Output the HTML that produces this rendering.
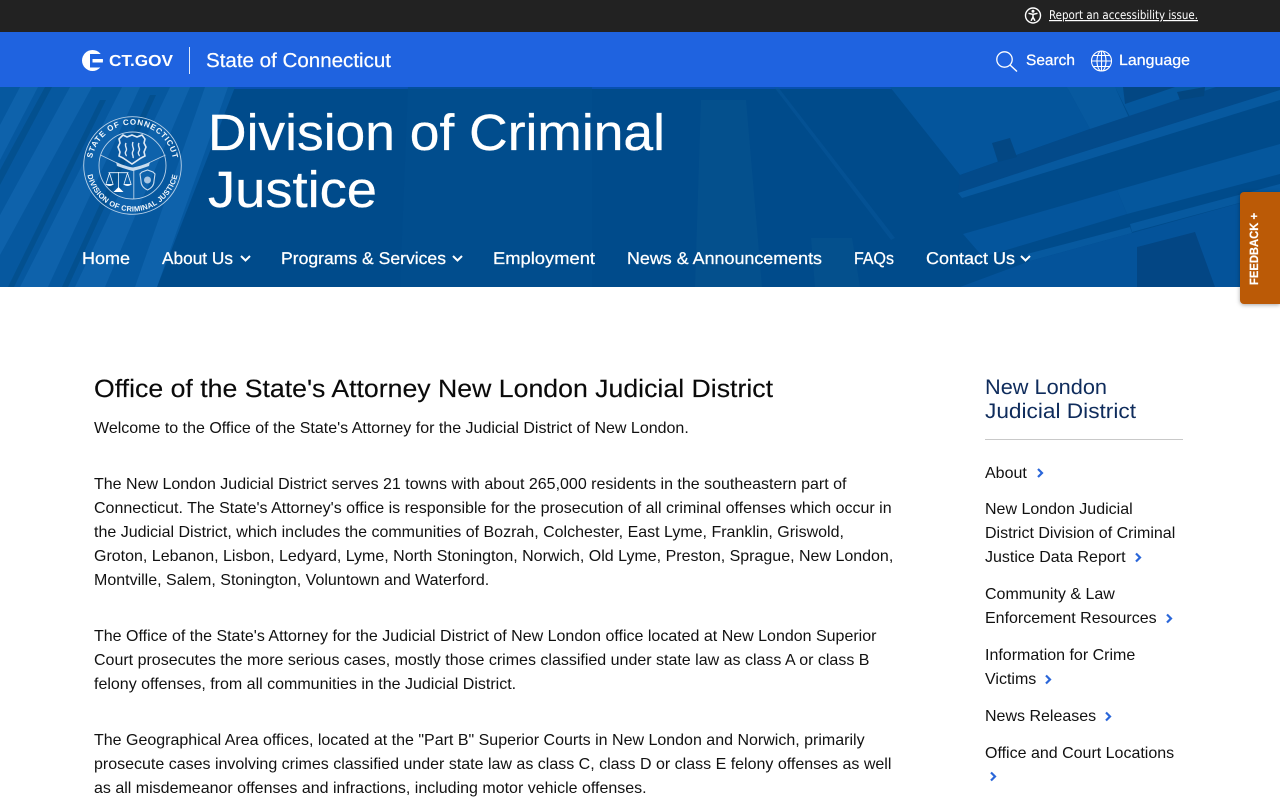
<!DOCTYPE html>
<html lang="en"><head><meta charset="utf-8"><title>Division of Criminal Justice</title>
<style>
html,body{margin:0;padding:0;background:#fff;width:1280px;height:800px;overflow:hidden}
body{position:relative;font-family:"Liberation Sans",Arial,sans-serif;color:#111}
svg{position:absolute;left:0;top:0;display:block;text-rendering:geometricPrecision}
.l{position:absolute;white-space:nowrap;font-size:16px;line-height:24px;color:#111}
.fb{position:absolute;left:1240px;top:192px;width:40px;height:112px;background:#bb5a06;border-radius:4px 0 0 4px;box-shadow:0 1px 4px rgba(0,0,0,.35)}
</style></head><body>
<svg width="1280" height="800" viewBox="0 0 1280 800" font-family="'Liberation Sans',sans-serif">
<defs>
<clipPath id="hero"><rect x="0" y="87" width="1280" height="200"/></clipPath>
<path id="top" d="M92 172a41 41 0 1 1 81 0" fill="none"/>
<path id="bot" d="M87.200 157.500a46 46 0 1 0 90.600 0" fill="none"/>
</defs>
<rect width="1280" height="32" fill="#222"/>
<rect y="32" width="1280" height="55" fill="#1f63e0"/>
<rect y="87" width="1280" height="200" fill="#004b8b"/>
<g clip-path="url(#hero)">
<rect y="87" width="1280" height="2" fill="#0750b0"/>
<polygon points="0,87 235,87 157,287 0,287" fill="#06589f"/>
<g fill="#0e62ab">
<polygon points="0,125 20,87 38,87 0,160"/><polygon points="0,215 70,87 92,87 0,255"/>
<polygon points="20,287 122,87 140,87 48,287"/><polygon points="75,287 170,87 190,87 105,287"/>
<polygon points="135,287 205,87 228,87 157,287"/>
</g>
<g fill="#03508f"><polygon points="0,170 45,87 52,87 0,185"/><polygon points="8,287 100,100 106,100 14,287"/><polygon points="62,287 150,95 156,95 68,287"/></g>
<polygon points="408,87 592,87 592,287 400,287" fill="#024e8f" opacity=".6"/>
<polygon points="701,100 746,100 762,287 695,287" fill="#07538f" opacity=".6"/>
<polygon points="811,238 852,238 860,287 815,287" fill="#07538f" opacity=".6"/>
<polygon points="774,87 778,87 895,238 891,240" fill="#07589c" opacity=".5"/>
<!-- architecture, right side -->
<polygon points="890,87 1067,87 1090,129 960,175" fill="#04559c"/>
<polygon points="1067,87 1115,87 1130,120 1090,129" fill="#07599f"/>
<polygon points="1115,87 1216,87 1130,117" fill="#05579d"/>
<polygon points="960,175 1090,129 1216,87 1280,87 1280,90 1067,157 958,193" fill="#034a8a"/>
<polygon points="958,193 1067,157 1280,90 1280,100 1070,165 962,198" fill="#07599f"/>
<polygon points="963,234 1117,190 1127,214 983,257" fill="#04559c"/>
<polygon points="1117,190 1280,144 1280,174 1127,214" fill="#05579d"/>
<polygon points="1130,224 1280,184 1280,192 1132,232" fill="#07599f"/>
<polygon points="1027,254 1130,227 1132,233 1030,261" fill="#07599f"/>
<polygon points="1030,261 1132,233 1280,192 1280,287 960,287" fill="#04539a"/>
<polygon points="1137,247 1195,232 1215,287 1137,287" fill="#034684"/>
<polygon points="992,143 1010,138 1017,157 998,162" fill="#034783"/>
<polygon points="1123,87 1175,87 1125,104" fill="#034783"/>
<polygon points="1177,92 1205,87 1204,96 1180,100" fill="#034680"/>
</g>
<!-- top bar -->
<circle cx="1033" cy="15.500" r="7.500" fill="none" stroke="#fff" stroke-width="1.400"/>
<circle cx="1033" cy="11.300" r="1.500" fill="#fff"/>
<path d="M1028.500 13.300l4.500 1 4.500-1M1033 14.300v3l-2 3.500M1033 17.300l2 3.500" fill="none" stroke="#fff" stroke-width="1.500"/>
<text x="1049" y="19" font-family="'DejaVu Sans',sans-serif" font-size="12" fill="#fff" text-decoration="underline" textLength="149" lengthAdjust="spacingAndGlyphs">Report an accessibility issue.</text>
<!-- CT.GOV -->
<circle cx="92.500" cy="60.500" r="10.500" fill="#fff"/>
<rect x="90" y="54" width="14" height="5" fill="#1f63e0"/><rect x="90" y="62.500" width="14" height="5" fill="#1f63e0"/><rect x="90" y="54" width="2.500" height="13.500" fill="#1f63e0"/>
<text x="109" y="66" font-size="16" font-weight="700" fill="#fff" textLength="64" lengthAdjust="spacingAndGlyphs">CT.GOV</text>
<rect x="189" y="47" width="1" height="27" fill="#dfe9fb"/>
<text x="206" y="67" font-size="20" fill="#fff" stroke="#fff" stroke-width=".2" textLength="185" lengthAdjust="spacingAndGlyphs">State of Connecticut</text>
<circle cx="1004.500" cy="59.500" r="7.700" fill="none" stroke="#fff" stroke-width="1.300"/>
<path d="M1010 65l7 6.500" stroke="#fff" stroke-width="1.400"/>
<text x="1026" y="65" font-size="15" fill="#fff" stroke="#fff" stroke-width=".25" textLength="49" lengthAdjust="spacingAndGlyphs">Search</text>
<g fill="none" stroke="#fff" stroke-width="1.100"><circle cx="1101.500" cy="61" r="10"/><ellipse cx="1101.500" cy="61" rx="4.500" ry="10"/><path d="M1101.500 51v20M1091.500 61h20M1093 55.500h17M1093 66.500h17"/></g>
<text x="1119" y="65" font-size="15" fill="#fff" stroke="#fff" stroke-width=".25" textLength="71" lengthAdjust="spacingAndGlyphs">Language</text>
<!-- seal -->
<g fill="none" stroke="#b9d1e8">
<circle cx="132.500" cy="165.500" r="48.800" stroke-width=".9"/>
<circle cx="132.500" cy="165.500" r="33.500" stroke-width=".9"/>
<path d="M100.500 155l16.500 8M165.500 155l-17 8M133.800 169v30" stroke-width=".9"/>
</g>
<text font-size="8" font-weight="700" fill="#f4f8fc"><textPath href="#top" startOffset="50%" text-anchor="middle" textLength="114" lengthAdjust="spacing">STATE OF CONNECTICUT</textPath></text>
<text font-size="7.500" font-weight="700" fill="#f4f8fc" letter-spacing=".25"><textPath href="#bot" startOffset="50%" text-anchor="middle">DIVISION OF CRIMINAL JUSTICE</textPath></text>
<!-- crest -->
<path d="M119 139l4-4 4 2 5-2 5 2 5-2 3 4-1 4 2 4-2 5 1 4-4 2-9 6-9-6-4-2 1-4-2-5 2-4z" fill="#0b5aa3" stroke="#dfeaf5" stroke-width="1.600"/>
<path d="M126 143c-2 4 2 5 0 8s1 4 0 5M133 142c-2 5 2 6 0 9s1 5 0 7M139 143c-2 4 2 5 0 8s1 4 0 5" fill="none" stroke="#dfeaf5" stroke-width="1.400"/>
<path d="M116 162q8 4 17 5.500 8-1.500 17-5.500l-1 4q-8 3-16 5-8-2-16-5z" fill="#c9dcee"/>
<!-- scales -->
<path d="M108.500 172.700h20M118.500 172v19M109.500 173l-3.500 11M109.500 173l3.500 11M127.500 173l-3.500 11M127.500 173l3.500 11" fill="none" stroke="#eef5fb" stroke-width=".8"/>
<path d="M105 184h9q-4.500 4-9 0zM123 184h9q-4.500 4-9 0z" fill="#eef5fb"/>
<path d="M118.500 187l5 5h-10z" fill="#fff"/>
<!-- badge -->
<path d="M142 172l5.500-2 5.500 2q1 1 2 2l-1 7q0 6-6.500 9-6.500-3-6.500-9l-1-7q1-1 2-2z" fill="none" stroke="#c9dcee" stroke-width="1.100"/>
<circle cx="147.500" cy="180" r="3.500" fill="#a9c6e2"/>
<!-- title -->
<text x="208" y="150" font-size="51" fill="#fff" stroke="#fff" stroke-width=".3" textLength="457" lengthAdjust="spacingAndGlyphs">Division of Criminal</text>
<text x="208" y="207" font-size="51" fill="#fff" stroke="#fff" stroke-width=".3" textLength="169" lengthAdjust="spacingAndGlyphs">Justice</text>
<!-- nav -->
<g font-size="17" fill="#fff" stroke="#fff" stroke-width=".25">
<text x="82" y="264" textLength="48" lengthAdjust="spacingAndGlyphs">Home</text>
<text x="162" y="264" textLength="71" lengthAdjust="spacingAndGlyphs">About Us</text>
<text x="281" y="264" textLength="165" lengthAdjust="spacingAndGlyphs">Programs &amp; Services</text>
<text x="493" y="264" textLength="102" lengthAdjust="spacingAndGlyphs">Employment</text>
<text x="627" y="264" textLength="195" lengthAdjust="spacingAndGlyphs">News &amp; Announcements</text>
<text x="854" y="264" textLength="40" lengthAdjust="spacingAndGlyphs">FAQs</text>
<text x="926" y="264" textLength="89" lengthAdjust="spacingAndGlyphs">Contact Us</text>
</g>
<g fill="none" stroke="#fff" stroke-width="2"><path d="M241 256l4.500 4.500 4.500-4.500M453 256l4.500 4.500 4.500-4.500M1021 256l4.500 4.500 4.500-4.500"/></g>
<!-- headings -->
<text x="94" y="397" font-size="25" fill="#0a0a0a" stroke="#0a0a0a" stroke-width=".15" textLength="679" lengthAdjust="spacingAndGlyphs">Office of the State's Attorney New London Judicial District</text>
<text x="985" y="394" font-size="21" fill="#0f2c5c" textLength="122" lengthAdjust="spacingAndGlyphs">New London</text>
<text x="985" y="418" font-size="21" fill="#0f2c5c" textLength="151" lengthAdjust="spacingAndGlyphs">Judicial District</text>
<rect x="985" y="439" width="198" height="1" fill="#c9c9c9"/>
<!-- chevrons -->
<g fill="none" stroke="#2a66d9" stroke-width="2.200"><path d="M1038 469l4 4-4 4M1136 553.500l4 4-4 4M1167 614.500l4 4-4 4M1046 675.500l4 4-4 4M1106 712.500l4 4-4 4M991 772.500l4 4-4 4"/></g>
</svg>

<div class="l" style="left:94px;top:417px">Welcome to the Office of the State's Attorney for the Judicial District of New London.</div>
<div class="l" style="left:94px;top:473px">The New London Judicial District serves 21 towns with about 265,000 residents in the southeastern part of<br>Connecticut. The State's Attorney's office is responsible for the prosecution of all criminal offenses which occur in<br>the Judicial District, which includes the communities of Bozrah, Colchester, East Lyme, Franklin, Griswold,<br>Groton, Lebanon, Lisbon, Ledyard, Lyme, North Stonington, Norwich, Old Lyme, Preston, Sprague, New London,<br>Montville, Salem, Stonington, Voluntown and Waterford.</div>
<div class="l" style="left:94px;top:625px">The Office of the State's Attorney for the Judicial District of New London office located at New London Superior<br>Court prosecutes the more serious cases, mostly those crimes classified under state law as class A or class B<br>felony offenses, from all communities in the Judicial District.</div>
<div class="l" style="left:94px;top:729px">The Geographical Area offices, located at the "Part B" Superior Courts in New London and Norwich, primarily<br>prosecute cases involving crimes classified under state law as class C, class D or class E felony offenses as well<br>as all misdemeanor offenses and infractions, including motor vehicle offenses.</div>

<div class="l" style="left:985px;top:462px">About</div>
<div class="l" style="left:985px;top:498px">New London Judicial<br>District Division of Criminal<br>Justice Data Report</div>
<div class="l" style="left:985px;top:583px">Community &amp; Law<br>Enforcement Resources</div>
<div class="l" style="left:985px;top:644px">Information for Crime<br>Victims</div>
<div class="l" style="left:985px;top:705px">News Releases</div>
<div class="l" style="left:985px;top:742px">Office and Court Locations</div>

<div class="fb"><svg width="40" height="112" viewBox="0 0 40 112"><text transform="translate(18,93) rotate(-90)" font-family="'Liberation Sans',sans-serif" font-size="12" font-weight="700" fill="#fff" stroke="#fff" stroke-width=".2" textLength="72" lengthAdjust="spacingAndGlyphs">FEEDBACK +</text></svg></div>
</body></html>
